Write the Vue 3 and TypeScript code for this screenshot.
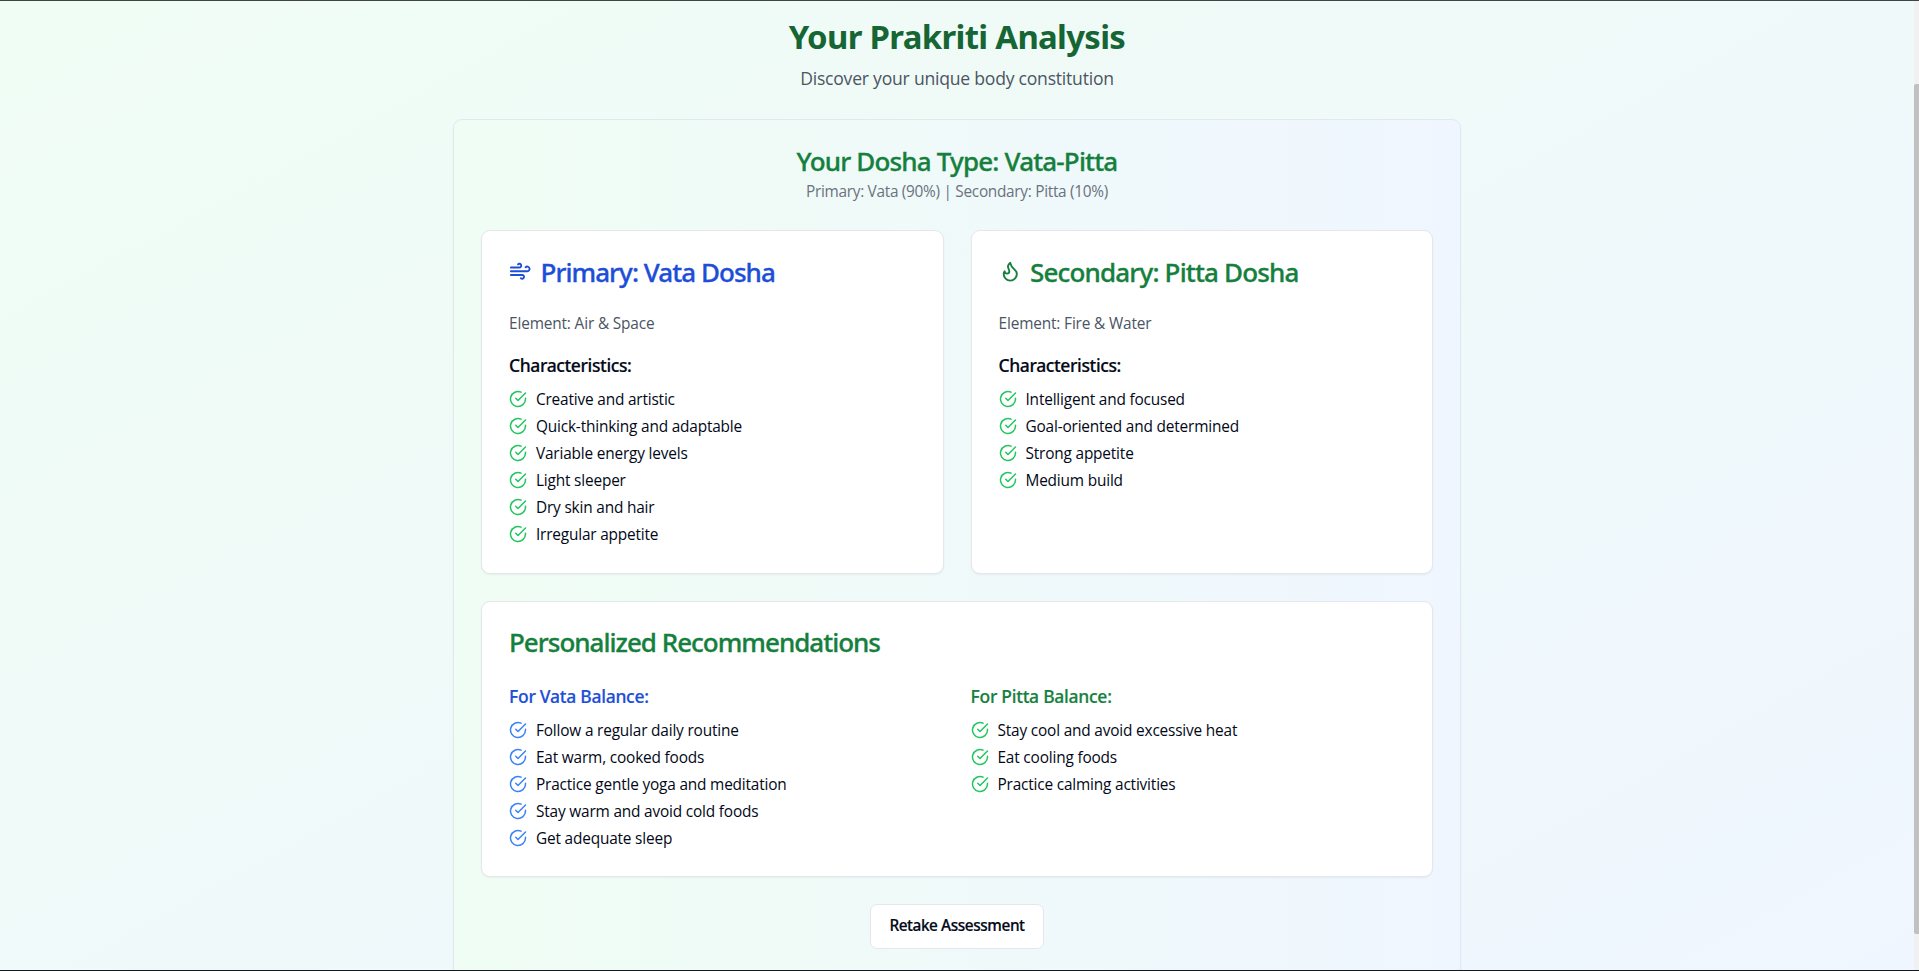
<script setup lang="ts">
interface Dosha {
  key: string
  title: string
  element: string
  icon: string[]
  traits: string[]
}

interface Advice {
  key: string
  title: string
  tips: string[]
}

const doshas: Dosha[] = [
  {
    key: 'vata',
    title: 'Primary: Vata Dosha',
    element: 'Element: Air & Space',
    icon: [
      'M17.7 7.7a2.5 2.5 0 1 1 1.8 4.3H2',
      'M9.6 4.6A2 2 0 1 1 11 8H2',
      'M12.6 19.4A2 2 0 1 0 14 16H2',
    ],
    traits: [
      'Creative and artistic',
      'Quick-thinking and adaptable',
      'Variable energy levels',
      'Light sleeper',
      'Dry skin and hair',
      'Irregular appetite',
    ],
  },
  {
    key: 'pitta',
    title: 'Secondary: Pitta Dosha',
    element: 'Element: Fire & Water',
    icon: [
      'M8.5 14.5A2.5 2.5 0 0 0 11 12c0-1.38-.5-2-1-3-1.072-2.143-.224-4.054 2-6 .5 2.5 2 4.9 4 6.5 2 1.6 3 3.5 3 5.5a7 7 0 1 1-14 0c0-1.153.433-2.294 1-3a2.5 2.5 0 0 0 2.5 2.5z',
    ],
    traits: [
      'Intelligent and focused',
      'Goal-oriented and determined',
      'Strong appetite',
      'Medium build',
    ],
  },
]

const advice: Advice[] = [
  {
    key: 'vata',
    title: 'For Vata Balance:',
    tips: [
      'Follow a regular daily routine',
      'Eat warm, cooked foods',
      'Practice gentle yoga and meditation',
      'Stay warm and avoid cold foods',
      'Get adequate sleep',
    ],
  },
  {
    key: 'pitta',
    title: 'For Pitta Balance:',
    tips: [
      'Stay cool and avoid excessive heat',
      'Eat cooling foods',
      'Practice calming activities',
    ],
  },
]
</script>

<template>
  <div class="frame">
    <main class="page">
      <header class="intro">
        <h1>Your Prakriti Analysis</h1>
        <p>Discover your unique body constitution</p>
      </header>

      <section class="result">
        <div class="result-head">
          <h2 class="heading type">Your Dosha Type: Vata-Pitta</h2>
          <p>Primary: Vata (90%) | Secondary: Pitta (10%)</p>
        </div>

        <div class="doshas">
          <article v-for="d in doshas" :key="d.key" class="card dosha" :class="d.key">
            <h3 class="heading">
              <svg class="icon" viewBox="0 0 24 24">
                <path v-for="p in d.icon" :key="p" :d="p" />
              </svg>
              <span>{{ d.title }}</span>
            </h3>
            <p class="element">{{ d.element }}</p>
            <h4>Characteristics:</h4>
            <ul>
              <li v-for="t in d.traits" :key="t">
                <svg class="check" viewBox="0 0 24 24">
                  <path d="M22 11.08V12a10 10 0 1 1-5.93-9.14" />
                  <path d="m9 11 3 3L22 4" />
                </svg>
                <span>{{ t }}</span>
              </li>
            </ul>
          </article>
        </div>

        <article class="card recommendations">
          <h3 class="heading">Personalized Recommendations</h3>
          <div class="columns">
            <div v-for="a in advice" :key="a.key" class="advice" :class="a.key">
              <h4>{{ a.title }}</h4>
              <ul>
                <li v-for="t in a.tips" :key="t">
                  <svg class="check" viewBox="0 0 24 24">
                    <path d="M22 11.08V12a10 10 0 1 1-5.93-9.14" />
                    <path d="m9 11 3 3L22 4" />
                  </svg>
                  <span>{{ t }}</span>
                </li>
              </ul>
            </div>
          </div>
        </article>

        <div class="actions">
          <button type="button">Retake Assessment</button>
        </div>
      </section>
    </main>
    <div class="scrollbar"><div class="thumb"></div></div>
  </div>
</template>

<style>
body {
  margin: 0;
  overflow: hidden;
}
</style>

<style scoped>
.frame {
  box-sizing: border-box;
  display: flex;
  height: 971px;
  border-top: 1px solid #404442;
  border-bottom: 1px solid #14191f;
  overflow: hidden;
  color: #020817;
  font-family: 'Open Sans', 'Noto Sans', sans-serif;
}

h1,
h2,
h3,
h4,
p,
ul {
  margin: 0;
  padding: 0;
}

.page {
  box-sizing: border-box;
  flex: 1;
  min-width: 0;
  padding-top: 16px;
  display: flex;
  flex-direction: column;
  align-items: center;
  background: linear-gradient(to bottom right, #f0fdf4, #eff6ff) 0 -74px / 100% 1061px no-repeat;
}

.intro {
  text-align: center;
}

.intro h1 {
  font: 700 32.9px/40px 'Noto Sans', sans-serif;
  letter-spacing: -0.67px;
  color: #166534;
}

.intro p {
  margin-top: 8px;
  font-size: 17.6px;
  line-height: 27px;
  letter-spacing: -0.235px;
  color: #4b5563;
}

.result {
  box-sizing: border-box;
  flex-shrink: 0;
  width: 1008px;
  margin-top: 27px;
  padding: 27px;
  border: 1px solid #e2e8f0;
  border-radius: 9px;
  background: linear-gradient(to right, #f0fdf4, #eff6ff);
  box-shadow: 0 1px 2px rgba(0, 0, 0, 0.05);
}

.result-head {
  padding-top: 1px;
  text-align: center;
}

.result-head p {
  margin: 5px 0 27px;
  font-size: 15.4px;
  line-height: 23px;
  letter-spacing: -0.3px;
  color: #6b7280;
}

.heading {
  font: 500 26px/27px 'Noto Sans', sans-serif;
  letter-spacing: -0.83px;
  -webkit-text-stroke: 0.3px currentColor;
  color: #15803d;
}

.doshas {
  display: grid;
  grid-template-columns: 1fr 1fr;
  gap: 27px;
}

.card {
  box-sizing: border-box;
  padding: 27px;
  border: 1px solid #e5e7eb;
  border-radius: 9px;
  background: #fff;
  box-shadow: 0 1px 2px rgba(0, 0, 0, 0.05);
}

.dosha {
  padding-bottom: 27px;
}

.dosha .heading {
  display: flex;
  align-items: center;
  gap: 9px;
}

.dosha .heading span,
li span {
  padding-top: 1px;
  margin-bottom: -1px;
}

.dosha.vata .heading {
  color: #1d4ed8;
  letter-spacing: -0.96px;
}

.dosha.pitta .heading {
  letter-spacing: -0.83px;
}

.icon {
  width: 22.5px;
  height: 22.5px;
}

svg {
  flex: none;
  fill: none;
  stroke: currentColor;
  stroke-width: 2;
  stroke-linecap: round;
  stroke-linejoin: round;
}

.element {
  margin-top: 28px;
  font-size: 15.4px;
  line-height: 22.5px;
  letter-spacing: -0.15px;
  color: #4b5563;
}

h4 {
  font: 500 17.5px/27px 'Noto Sans', sans-serif;
  letter-spacing: -0.26px;
  -webkit-text-stroke: 0.2px currentColor;
}

.dosha h4 {
  margin-top: 16px;
  letter-spacing: -0.37px;
}

ul {
  display: flex;
  flex-direction: column;
  gap: 4.5px;
  margin-top: 9px;
  list-style: none;
}

.dosha ul {
  margin-top: 9.5px;
}

li {
  display: flex;
  align-items: center;
  gap: 9px;
  font-size: 15.4px;
  line-height: 22.5px;
  letter-spacing: -0.18px;
}

.check {
  width: 18px;
  height: 18px;
  color: #22c55e;
}

.recommendations {
  margin-top: 27.5px;
  padding-bottom: 26px;
}

.recommendations .heading {
  letter-spacing: -1px;
}

.columns {
  display: grid;
  grid-template-columns: 1fr 1fr;
  gap: 27px;
  margin-top: 27px;
}

.advice.vata h4 {
  color: #1d4ed8;
}

.advice.pitta h4 {
  color: #15803d;
}

.advice.vata .check {
  color: #3b82f6;
}

.actions {
  display: flex;
  justify-content: center;
  margin-top: 27px;
}

button {
  box-sizing: border-box;
  width: 174px;
  height: 45px;
  padding: 0;
  border: 1px solid #e2e8f0;
  border-radius: 7px;
  background: #fff;
  color: #020817;
  font: 500 15.4px/22px 'Noto Sans', sans-serif;
  letter-spacing: -0.43px;
  -webkit-text-stroke: 0.2px currentColor;
}

.scrollbar {
  flex: none;
  box-sizing: border-box;
  width: 5px;
  padding-top: 83px;
  background: #f1f1f1;
}

.thumb {
  height: 850px;
  border-radius: 2px 0 0 2px;
  background: #c1c1c1;
}
</style>
